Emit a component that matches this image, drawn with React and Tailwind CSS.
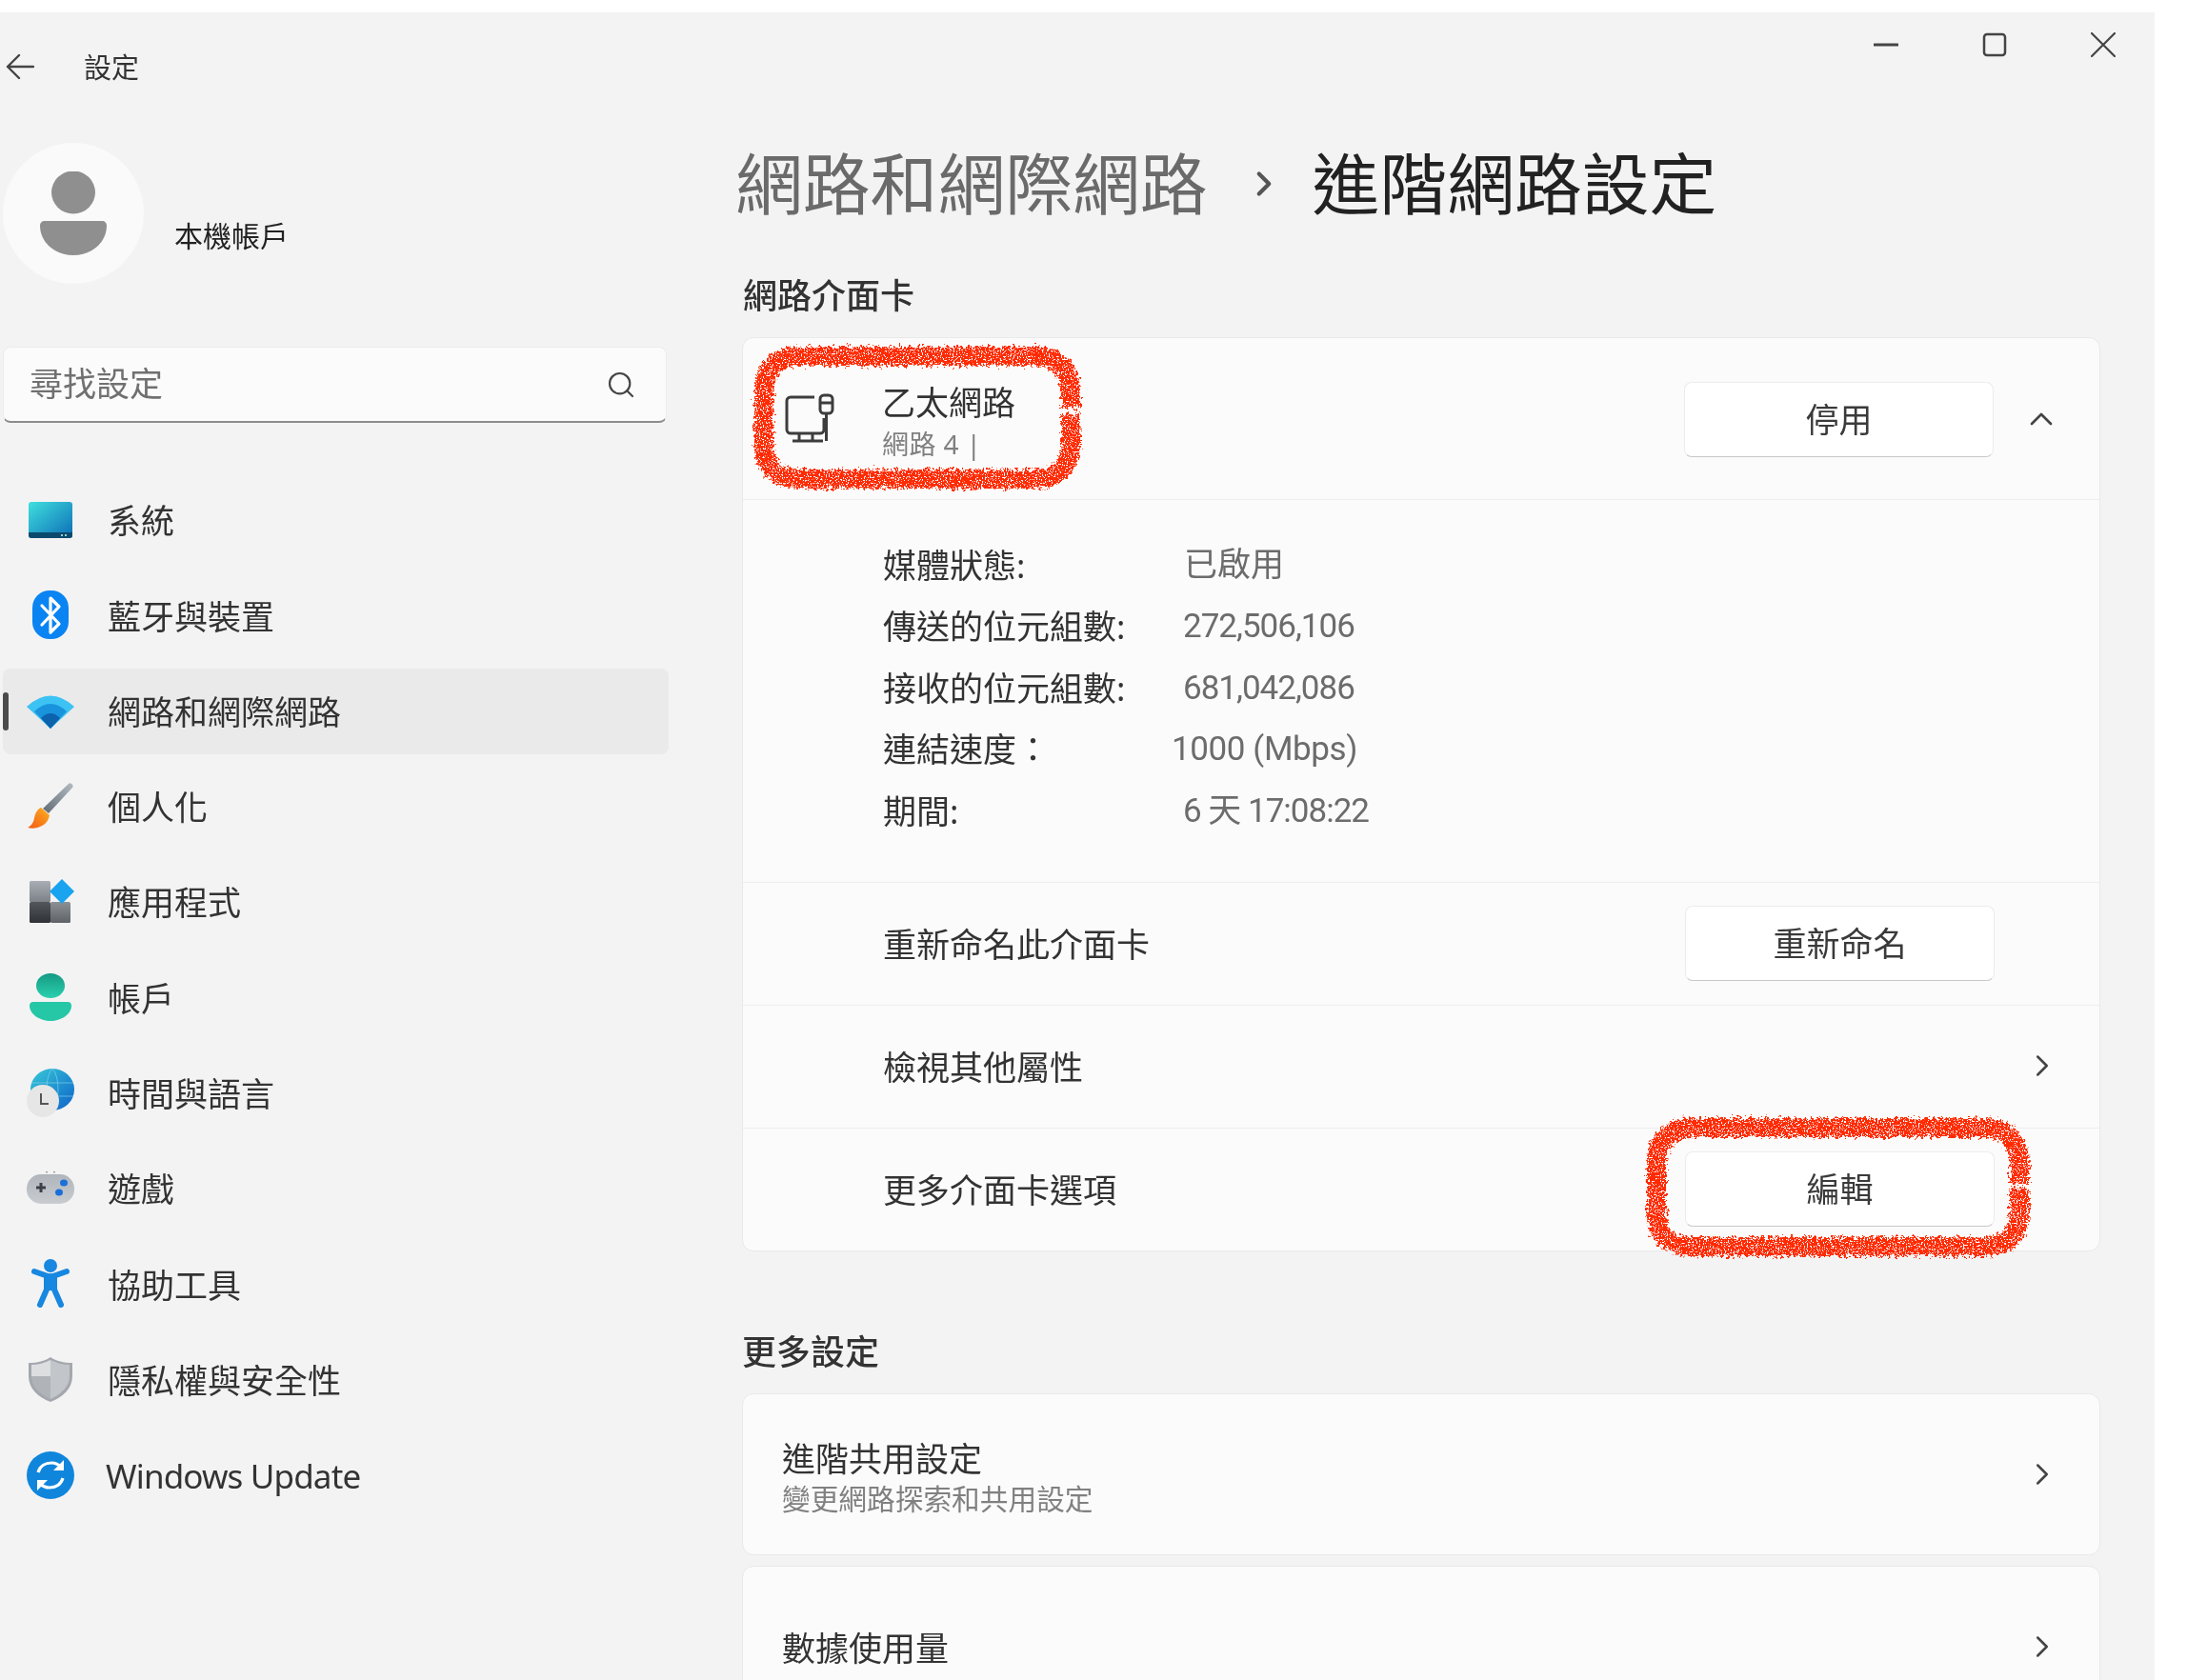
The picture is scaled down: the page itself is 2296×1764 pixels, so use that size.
import React from 'react'
import { ChevronRight, ChevronUp, Search } from 'lucide-react'

const SystemIcon = () => (
  <svg width="50" height="50" viewBox="0 0 50 50">
    <defs>
      <linearGradient id="sys" x1="0" y1="0" x2="1" y2="1">
        <stop offset="0" stopColor="#3fe0de" />
        <stop offset="1" stopColor="#0c6cb6" />
      </linearGradient>
    </defs>
    <rect x="2" y="6" width="46" height="38" rx="3" fill="url(#sys)" />
    <path d="M2 38h46v3a3 3 0 0 1-3 3H5a3 3 0 0 1-3-3z" fill="#0b4a6c" />
    <rect x="36" y="40" width="2" height="2" fill="#9cc" />
    <rect x="40" y="40" width="2" height="2" fill="#9cc" />
  </svg>
)

const BluetoothIcon = () => (
  <svg width="50" height="52" viewBox="0 0 50 52">
    <rect x="6" y="0" width="38" height="51" rx="18" fill="#0a84f2" />
    <path d="M16 16l18 19-9 9V8l9 9-18 19" fill="none" stroke="#fff" strokeWidth="3.2" strokeLinejoin="round" strokeLinecap="round" />
  </svg>
)

const WifiIcon = () => (
  <svg width="50" height="38" viewBox="0 0 50 38">
    <path d="M0 14Q25 -9 50 14L25 37z" fill="#3cc3f3" />
    <path d="M8 19Q25 3 42 19L25 37z" fill="#1a93dd" />
    <path d="M15 26Q25 16 35 26L25 37z" fill="#0c62ad" />
  </svg>
)

const BrushIcon = () => (
  <svg width="50" height="50" viewBox="0 0 50 50">
    <defs>
      <linearGradient id="brush" x1="0" y1="1" x2="1" y2="0">
        <stop offset="0" stopColor="#5f6b75" />
        <stop offset="1" stopColor="#b4bbc2" />
      </linearGradient>
      <linearGradient id="tip" x1="0" y1="1" x2="1" y2="0">
        <stop offset="0" stopColor="#f25a12" />
        <stop offset="1" stopColor="#fdb022" />
      </linearGradient>
    </defs>
    <path d="M47 1c2 1 2 3 1 4L23 32l-6-5L44 1c1-1 2-1 3 0z" fill="url(#brush)" />
    <path d="M15 26l9 8c-1 5-4 10-10 12-4 2-9 2-13 1 4-2 6-5 7-10 1-5 3-9 7-11z" fill="url(#tip)" />
  </svg>
)

const AppsIcon = () => (
  <svg width="50" height="48" viewBox="0 0 50 48">
    <defs>
      <linearGradient id="tileA" x1="0" y1="0" x2="0" y2="1">
        <stop offset="0" stopColor="#a9aeb4" />
        <stop offset="1" stopColor="#7d8288" />
      </linearGradient>
      <linearGradient id="tileB" x1="0" y1="0" x2="0" y2="1">
        <stop offset="0" stopColor="#53575c" />
        <stop offset="1" stopColor="#2f3236" />
      </linearGradient>
      <linearGradient id="tileC" x1="0" y1="0" x2="0" y2="1">
        <stop offset="0" stopColor="#8c9197" />
        <stop offset="1" stopColor="#5f6368" />
      </linearGradient>
    </defs>
    <rect x="3" y="2" width="22" height="22" rx="1.5" fill="url(#tileA)" />
    <rect x="3" y="24" width="22" height="22" rx="1.5" fill="url(#tileB)" />
    <rect x="25" y="24" width="21" height="22" rx="1.5" fill="url(#tileC)" />
    <path d="M37 0l13 13-13 13-13-13z" fill="#1aa3ee" />
  </svg>
)

const AccountIcon = () => (
  <svg width="50" height="50" viewBox="0 0 50 50">
    <defs>
      <linearGradient id="acct" x1="0" y1="0" x2="0" y2="1">
        <stop offset="0" stopColor="#159a84" />
        <stop offset="1" stopColor="#2bd0ae" />
      </linearGradient>
    </defs>
    <ellipse cx="25" cy="13" rx="15" ry="13" fill="url(#acct)" />
    <path d="M7 30h36c3 0 4 2 4 4 0 9-11 16-22 16S3 43 3 34c0-2 1-4 4-4z" fill="#25c7a6" />
  </svg>
)

const TimeIcon = () => (
  <svg width="50" height="52" viewBox="0 0 50 52">
    <defs>
      <linearGradient id="globe" x1="0" y1="0" x2="1" y2="1">
        <stop offset="0" stopColor="#36c9d8" />
        <stop offset="1" stopColor="#0d62c9" />
      </linearGradient>
    </defs>
    <ellipse cx="27" cy="22" rx="23" ry="22" fill="url(#globe)" />
    <path d="M27 0c-8 8-8 36 0 44M27 0c8 8 8 36 0 44M5 15h44M5 29h44" fill="none" stroke="#8fd8f0" strokeWidth="1" opacity="0.6" />
    <circle cx="17" cy="34" r="17" fill="#e6e6e6" />
    <path d="M15 26v11h8" fill="none" stroke="#555" strokeWidth="2" />
  </svg>
)

const GameIcon = () => (
  <svg width="50" height="36" viewBox="0 0 50 36">
    <defs>
      <linearGradient id="pad" x1="0" y1="0" x2="0" y2="1">
        <stop offset="0" stopColor="#b0b5bb" />
        <stop offset="1" stopColor="#c8ccd1" />
      </linearGradient>
    </defs>
    <rect x="0" y="3" width="50" height="31" rx="15" fill="url(#pad)" />
    <path d="M10 17h10M15 12v10" stroke="#3c4148" strokeWidth="3" />
    <ellipse cx="39" cy="12" rx="4" ry="3.5" fill="#1a6fd8" />
    <ellipse cx="34" cy="22" rx="4" ry="3.5" fill="#1a6fd8" />
    <circle cx="21" cy="0.8" r="0.8" fill="#666" />
    <circle cx="29" cy="0.8" r="0.8" fill="#666" />
  </svg>
)

const AccessIcon = () => (
  <svg width="50" height="52" viewBox="0 0 50 52">
    <circle cx="25" cy="7" r="7" fill="#1787e0" />
    <path d="M8 13l17 6 17-6" fill="none" stroke="#1787e0" strokeWidth="6" strokeLinecap="round" strokeLinejoin="round" />
    <path d="M25 18v12M21 20v12l-7 16M29 20v12l7 16" fill="none" stroke="#1787e0" strokeWidth="6" strokeLinecap="round" strokeLinejoin="round" />
  </svg>
)

const ShieldIcon = () => (
  <svg width="50" height="48" viewBox="0 0 50 48">
    <path d="M25 0c6 4 14 6 23 6v14c0 13-10 22-23 27C12 42 2 33 2 20V6c9 0 17-2 23-6z" fill="#a4a8ae" />
    <path d="M25 3c6 3 13 5 20 5v12c0 11-9 19-20 24z" fill="#c2c5c9" />
    <path d="M25 3c-6 3-13 5-20 5v12h20z" fill="#dcdee0" />
    <path d="M5 20c0 11 9 19 20 24V20z" fill="#b0b3b8" />
  </svg>
)

const UpdateIcon = () => (
  <svg width="50" height="50" viewBox="0 0 50 50">
    <circle cx="25" cy="25" r="25" fill="#0f86dc" />
    <path d="M12 22c2-7 8-10 14-10 5 0 8 2 11 5M38 28c-2 7-8 10-14 10-5 0-8-2-11-5" fill="none" stroke="#fff" strokeWidth="3.2" />
    <path d="M39 9v11H28zM11 41V30h11z" fill="#fff" />
  </svg>
)

const navItems = [
  { label: '系統', icon: <SystemIcon /> },
  { label: '藍牙與裝置', icon: <BluetoothIcon /> },
  { label: '網路和網際網路', icon: <WifiIcon />, active: true },
  { label: '個人化', icon: <BrushIcon /> },
  { label: '應用程式', icon: <AppsIcon /> },
  { label: '帳戶', icon: <AccountIcon /> },
  { label: '時間與語言', icon: <TimeIcon /> },
  { label: '遊戲', icon: <GameIcon /> },
  { label: '協助工具', icon: <AccessIcon /> },
  { label: '隱私權與安全性', icon: <ShieldIcon /> },
  { label: 'Windows Update', icon: <UpdateIcon /> },
]

const details = [
  { label: '媒體狀態:', value: '已啟用', cls: '' },
  { label: '傳送的位元組數:', value: '272,506,106', cls: 'tracking-[-1px] -ml-[1px]' },
  { label: '接收的位元組數:', value: '681,042,086', cls: 'tracking-[-1px] -ml-[1px]' },
  { label: '連結速度：', value: '1000 (Mbps)', cls: 'tracking-[-0.4px] -ml-[13px]' },
  { label: '期間:', value: '6 天 17:08:22', cls: 'tracking-[-1px] -ml-[1px]' },
]

const Btn = ({ children }) => (
  <button className="w-[325px] h-[79px] pt-[3px] bg-white rounded-lg border border-[#ececec] border-b-[#c8c8c8] text-[35px] text-[#3a3a3a]">
    {children}
  </button>
)

const Row = ({ label, children }) => (
  <div className="h-[129px] border-t border-[#eeeeee] flex items-center justify-between pl-[147px]">
    <span className="pt-[3px] text-[35px] text-[#333]">{label}</span>
    {children}
  </div>
)

const Chevron = () => <ChevronRight size={38} strokeWidth={1.6} className="text-[#444] mr-[41px]" />

// the two red marker rings scribbled over the screenshot
const Scribbles = () => (
  <svg className="absolute inset-0 pointer-events-none" width="2296" height="1764" viewBox="0 0 2296 1764">
    <defs>
      <filter id="rough" x="-5%" y="-10%" width="110%" height="120%">
        <feTurbulence type="fractalNoise" baseFrequency="0.3" numOctaves="3" seed="4" result="noise" />
        <feDisplacementMap in="SourceGraphic" in2="noise" scale="13" xChannelSelector="R" yChannelSelector="G" result="moved" />
        <feTurbulence type="fractalNoise" baseFrequency="0.7" numOctaves="2" seed="9" result="speck" />
        <feColorMatrix in="speck" type="matrix" values="0 0 0 0 0  0 0 0 0 0  0 0 0 0 0  0 0 0 -14 9" result="mask" />
        <feComposite in="moved" in2="mask" operator="in" />
      </filter>
    </defs>
    <g fill="none" stroke="#ff2a00" strokeWidth="20" strokeLinecap="butt" filter="url(#rough)">
      <path d="M1124 428V412c0-24-14-38-38-38H838c-24 0-36 14-36 38v55c0 24 14 36 38 36h246c24 0 38-12 38-36v-32" />
      <path d="M2120 1243v-21c0-24-14-38-38-38h-305c-24 0-38 14-38 38v51c0 24 14 36 38 36h305c24 0 38-12 38-36v-26" />
    </g>
  </svg>
)

export default function App() {
  return (
    <div className="relative w-[2296px] h-[1764px] overflow-hidden bg-white pt-[13px] pr-[34px] font-['Noto_Sans','Noto_Sans_CJK_TC',sans-serif]">
      <div className="h-[1751px] bg-[#f3f3f3] overflow-hidden blur-[0.7px]">
        {/* title bar */}
        <div className="h-[100px] flex justify-between">
          <div className="flex items-center h-[114px] pl-[6px]">
            <svg width="30" height="28" viewBox="0 0 30 28" fill="none" stroke="#444" strokeWidth="2.4" strokeLinecap="round" strokeLinejoin="round">
              <path d="M29 14H2M14 2L2 14l12 12" />
            </svg>
            <span className="ml-[52px] text-[29px] text-[#333] pt-[1px]">設定</span>
          </div>
          <div className="flex items-start pt-[21px] pr-[41px] gap-[88px]">
            <svg width="26" height="26" viewBox="0 0 26 26"><path d="M1 13h24" stroke="#444" strokeWidth="3" strokeLinecap="round" /></svg>
            <svg width="26" height="26" viewBox="0 0 26 26"><rect x="2" y="2" width="22" height="22" rx="3" fill="none" stroke="#444" strokeWidth="2.5" /></svg>
            <svg width="26" height="26" viewBox="0 0 26 26"><path d="M1 1l24 24M25 1L1 25" stroke="#444" strokeWidth="2.2" strokeLinecap="round" /></svg>
          </div>
        </div>

        <div className="flex">
          {/* sidebar */}
          <div className="w-[772px] shrink-0 pl-[3px]">
            <div className="mt-[37px] flex">
              <div className="w-[148px] h-[148px] rounded-full bg-[#fafafa] flex items-center justify-center">
                <svg width="72" height="88" viewBox="0 0 72 88">
                  <ellipse cx="36" cy="22" rx="23" ry="22.5" fill="#8f8f8f" />
                  <path d="M6 52h60c3 0 5 2 5 5 0 17-15 31-35 31S1 74 1 57c0-3 2-5 5-5z" fill="#8f8f8f" />
                </svg>
              </div>
              <div className="ml-[32px] mt-[74px] text-[30px] leading-[48px] text-[#222]">本機帳戶</div>
            </div>

            <div className="mt-[66px] w-[697px] h-[80px] rounded-lg bg-[#fbfbfb] border border-[#ececec] border-b-2 border-b-[#8c8c8c] flex items-center justify-between pl-[27px] pr-[31px]">
              <span className="text-[35px] text-[#707070]">尋找設定</span>
              <Search size={32} strokeWidth={1.6} className="text-[#444]" />
            </div>

            <div className="mt-[57px] flex flex-col gap-[10.300px] w-[699px]">
              {navItems.map((item) => (
                <div key={item.label} className={`relative h-[90px] rounded-lg flex items-center ${item.active ? 'bg-[#eaeaea]' : ''}`}>
                  {item.active && <div className="absolute left-0 top-[25px] w-[6px] h-[40px] rounded-full bg-[#4a4a4a]" />}
                  <div className="w-[50px] ml-[25px] flex justify-center">{item.icon}</div>
                  <span className={`pt-[3px] text-[35px] text-[#333] ${item.label === 'Windows Update' ? 'ml-[33px] tracking-[-0.85px]' : 'ml-[35px]'}`}>{item.label}</span>
                </div>
              ))}
            </div>
          </div>

          {/* main content */}
          <div className="flex-1 pr-[57px]">
            <div className="mt-[30px] h-[100px] flex items-center text-[70.800px]">
              <span className="text-[#6a6a6a]">網路和網際網路</span>
              <ChevronRight size={42} strokeWidth={2.4} className="text-[#555] ml-[38px] mr-[30px]" />
              <span className="text-[#222]">進階網路設定</span>
            </div>

            <div className="ml-[7px]">
              <div className="mt-[46px] h-[44px] pl-[1px] flex items-center text-[36px] font-medium text-[#333]">網路介面卡</div>
              <div className="mt-[21px] rounded-xl border border-[#e9e9e9] bg-[#fbfbfb] overflow-hidden">
                <div className="h-[169px] flex items-center justify-between pl-[43px]">
                  <div className="flex items-center">
                    <svg width="56" height="56" viewBox="0 0 56 56" fill="none" stroke="#3d3d3d" strokeWidth="3">
                      <path d="M32 5H7a4 4 0 0 0-4 4v30a4 4 0 0 0 4 4h31a4 4 0 0 0 4-4V27" />
                      <path d="M16 43v8M30 43v8M9 51h32" />
                      <rect x="38" y="3" width="13" height="19" rx="4" />
                      <path d="M38 11h13M44.500 22v29" />
                    </svg>
                    <div className="ml-[47px] pt-[7px]">
                      <div className="text-[35px] leading-[46px] text-[#333]">乙太網路</div>
                      <div className="text-[28px] leading-[40px] tracking-[0.4px] text-[#808080]">網路 4 |</div>
                    </div>
                  </div>
                  <div className="flex items-center pt-[1px]">
                    <Btn>停用</Btn>
                    <ChevronUp size={40} strokeWidth={1.6} className="text-[#444] ml-[30px] mr-[41px]" />
                  </div>
                </div>

                <div className="h-[402px] border-t border-[#eeeeee] pt-[37px] pl-[147px]">
                  {details.map((d) => (
                    <div key={d.label} className="h-[64.400px] flex items-center text-[35px]">
                      <span className="w-[316px] text-[#333]">{d.label}</span>
                      <span className={`font-['Roboto','Noto_Sans_CJK_TC',sans-serif] text-[#6c6c6c] ${d.cls}`}>{d.value}</span>
                    </div>
                  ))}
                </div>

                <Row label="重新命名此介面卡"><div className="mr-[110px] pb-[2px]"><Btn>重新命名</Btn></div></Row>
                <Row label="檢視其他屬性"><div className="pb-[2px]"><Chevron /></div></Row>
                <Row label="更多介面卡選項"><div className="mr-[110px] pb-[2px]"><Btn>編輯</Btn></div></Row>
              </div>

              <div className="mt-[84px] h-[44px] flex items-center text-[36px] font-medium text-[#333]">更多設定</div>
              <div className="mt-[21px] h-[170px] rounded-xl border border-[#e9e9e9] bg-[#fbfbfb] flex items-center justify-between pl-[41px]">
                <div className="pt-[6px]">
                  <div className="text-[35px] leading-[46px] text-[#333]">進階共用設定</div>
                  <div className="text-[29.700px] leading-[38px] text-[#808080]">變更網路探索和共用設定</div>
                </div>
                <Chevron />
              </div>
              <div className="mt-[11px] h-[169px] rounded-xl border border-[#e9e9e9] bg-[#fbfbfb] flex items-center justify-between pl-[41px]">
                <span className="pt-[5px] text-[35px] text-[#333]">數據使用量</span>
                <Chevron />
              </div>
            </div>
          </div>
        </div>
      </div>
      <Scribbles />
    </div>
  )
}
